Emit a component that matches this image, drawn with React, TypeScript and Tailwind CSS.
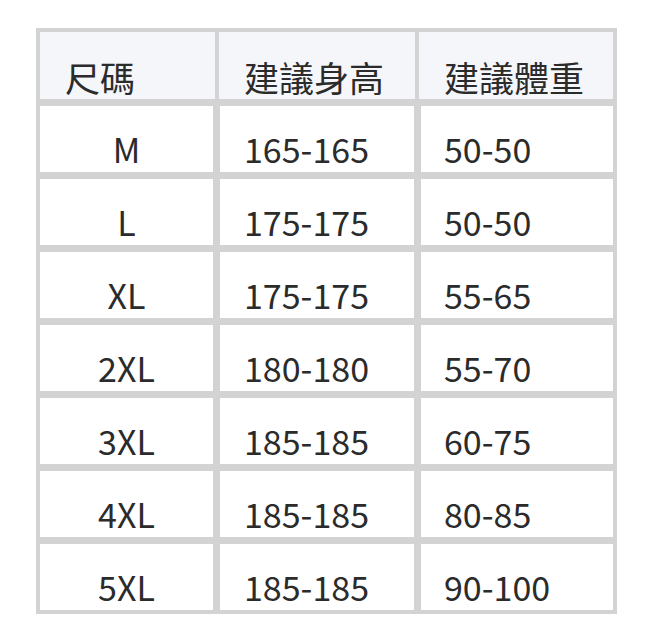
const rows = [
  ['M', '165-165', '50-50'],
  ['L', '175-175', '50-50'],
  ['XL', '175-175', '55-65'],
  ['2XL', '180-180', '55-70'],
  ['3XL', '185-185', '60-75'],
  ['4XL', '185-185', '80-85'],
  ['5XL', '185-185', '90-100'],
];

export default function App() {
  return (
    <div
      className="min-h-[641px] w-[652px] bg-white pl-[36px] pt-[28px] text-[#2b2b2b]"
      style={{ fontFamily: '"Noto Sans CJK TC", "Noto Sans", sans-serif' }}
    >
      <div className="w-[581px] bg-[#d3d3d3] px-[4px] pt-[4px] pb-[4px]">
        {/* header */}
        <div className="grid grid-cols-[175px_196px_194px] gap-[4px]">
          <div className="flex h-[67px] items-end bg-[#f5f6fa] pl-[25px] pb-[5px] text-[35px] leading-none">
            尺碼
          </div>
          <div className="flex h-[67px] items-end bg-[#f5f6fa] pl-[25px] pb-[5px] text-[35px] leading-none">
            建議身高
          </div>
          <div className="flex h-[67px] items-end bg-[#f5f6fa] pl-[25px] pb-[5px] text-[35px] leading-none">
            建議體重
          </div>
        </div>
        {/* body */}
        <div className="mt-[7px] grid grid-cols-[173px_194px_192px] gap-[7px]">
          {rows.map(([size, height, weight]) => (
            <div key={size} className="contents">
              <div className="flex h-[66px] items-center justify-center bg-white pt-[19px] text-[34px] leading-none">
                {size}
              </div>
              <div className="flex h-[66px] items-center bg-white pl-[24px] pt-[19px] text-[34px] leading-none">
                {height}
              </div>
              <div className="flex h-[66px] items-center bg-white pl-[23px] pt-[19px] text-[34px] leading-none">
                {weight}
              </div>
            </div>
          ))}
        </div>
      </div>
    </div>
  );
}
